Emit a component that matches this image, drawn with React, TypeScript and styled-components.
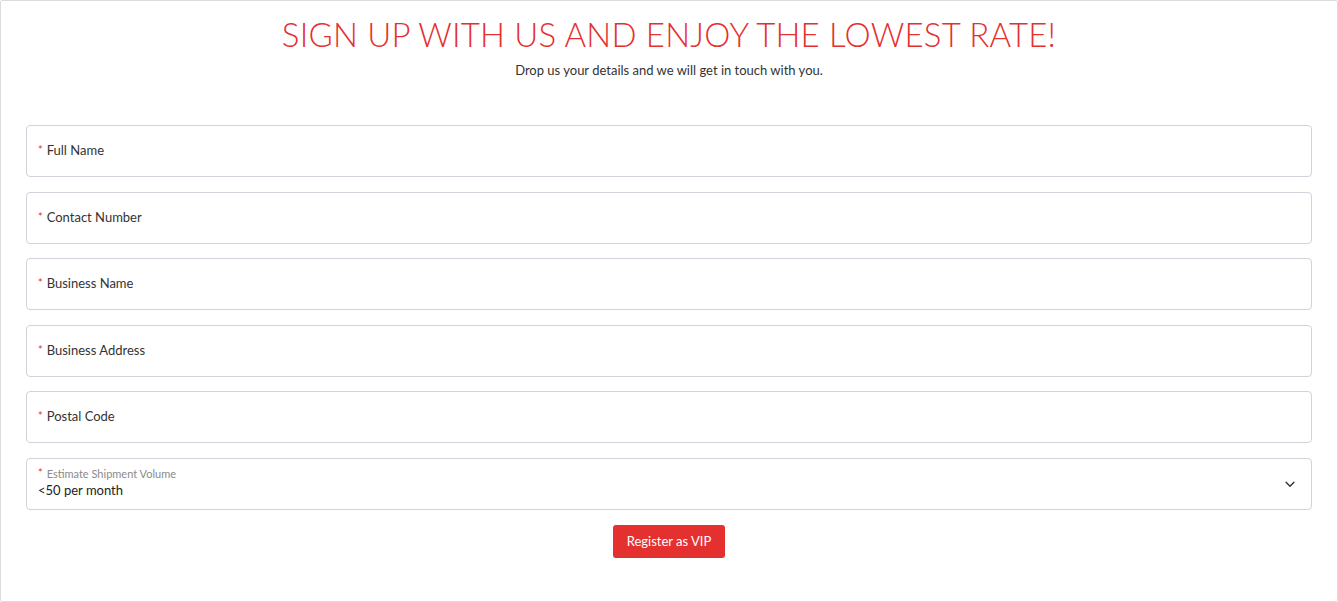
import React from 'react'
import styled, { createGlobalStyle } from 'styled-components'

const GlobalStyle = createGlobalStyle`
  html, body {
    margin: 0;
    padding: 0;
    background: #ffffff;
  }
  body {
    font-family: 'Lato', 'Noto Sans', sans-serif;
    color: #333333;
  }
  * {
    box-sizing: border-box;
  }
`

const fields = [
  'Full Name',
  'Contact Number',
  'Business Name',
  'Business Address',
  'Postal Code',
]

export default function App() {
  return (
    <>
      <GlobalStyle />
      <Card>
        <Header>
          <Title>SIGN UP WITH US AND ENJOY THE LOWEST RATE!</Title>
          <Subtitle>Drop us your details and we will get in touch with you.</Subtitle>
        </Header>

        <Form onSubmit={e => e.preventDefault()}>
          {fields.map(name => (
            <Field key={name}>
              <Label>
                <Required>*</Required>
                {name}
              </Label>
            </Field>
          ))}

          <SelectField>
            <SelectText>
              <SmallLabel>
                <Required>*</Required>
                Estimate Shipment Volume
              </SmallLabel>
              <Value>&lt;50 per month</Value>
            </SelectText>
            <Chevron viewBox="0 0 16 16" aria-hidden="true">
              <path d="M3.5 6l4.5 4.5L12.5 6" />
            </Chevron>
          </SelectField>

          <Actions>
            <Button type="submit">Register as VIP</Button>
          </Actions>
        </Form>
      </Card>
    </>
  )
}

///////////////////////////////////////////////////////////////////////////////////

const Card = styled.div`
  width: 1338px;
  height: 602px;
  border: 1px solid #dcdcdc;
  border-radius: 2px;
  padding: 13px 25px 0 25px;
  background: #ffffff;
`

const Header = styled.div`
  display: flex;
  flex-direction: column;
  align-items: center;
`

const Title = styled.h1`
  margin: 0;
  font-family: 'Lato', sans-serif;
  font-weight: 300;
  font-size: 33px;
  line-height: 40px;
  letter-spacing: 0.2px;
  color: #e53030;
`

const Subtitle = styled.p`
  margin: 7px 0 0;
  font-size: 13px;
  line-height: 18px;
  color: #333333;
`

const Form = styled.form`
  display: flex;
  flex-direction: column;
  gap: 14.6px;
  margin-top: 46px;
`

const Field = styled.div`
  display: flex;
  align-items: center;
  height: 52px;
  padding: 0 11px 2px;
  border: 1px solid #d0d3da;
  border-radius: 4px;
  background: #ffffff;
`

const Label = styled.span`
  font-size: 13px;
  color: #333333;
`

const Required = styled.span`
  color: #e53030;
  font-size: 11px;
  margin-right: 4px;
  vertical-align: 1px;
`

const SelectField = styled(Field)`
  justify-content: space-between;
  padding: 0 14px 3px 11px;
`

const SelectText = styled.div`
  display: flex;
  flex-direction: column;
  gap: 2px;
`

const SmallLabel = styled.span`
  font-size: 11px;
  line-height: 13px;
  color: #8a8a8a;
`

const Value = styled.span`
  font-size: 13px;
  line-height: 17px;
  color: #222222;
`

const Chevron = styled.svg`
  width: 14px;
  height: 14px;
  margin-top: 3px;
  fill: none;
  stroke: #333333;
  stroke-width: 1.6;
  stroke-linecap: round;
  stroke-linejoin: round;
`

const Actions = styled.div`
  display: flex;
  justify-content: center;
  margin-top: 0;
`

const Button = styled.button`
  height: 33px;
  padding: 0 13.5px;
  border: none;
  border-radius: 3px;
  background: #e53030;
  color: #ffffff;
  font-family: 'Lato', sans-serif;
  font-size: 13px;
  cursor: pointer;
`
